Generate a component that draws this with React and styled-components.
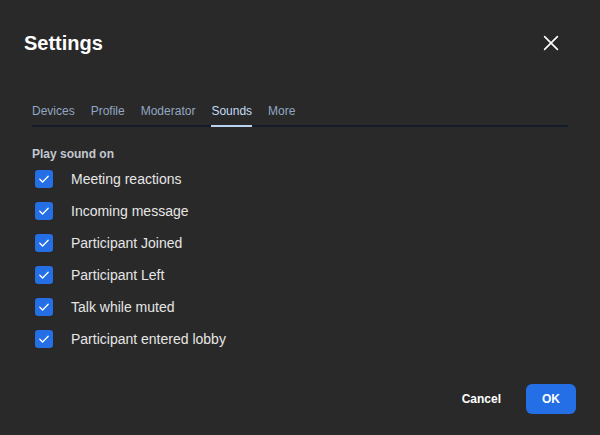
import React, { useState } from "react";
import styled, { createGlobalStyle } from "styled-components";

const GlobalStyle = createGlobalStyle`
  html, body {
    margin: 0;
    padding: 0;
    background: #292929;
    font-family: "Liberation Sans", Arial, sans-serif;
  }
`;

const Dialog = styled.div`
  width: 600px;
  height: 435px;
  box-sizing: border-box;
  background: #292929;
  padding: 24px 24px 21px;
  display: flex;
  flex-direction: column;
`;

const Header = styled.div`
  height: 38px;
  display: flex;
  align-items: center;
  justify-content: space-between;
`;

const Title = styled.h1`
  margin: 0;
  font-size: 20px;
  font-weight: 700;
  line-height: 24px;
  color: #ffffff;
`;

const CloseButton = styled.button`
  width: 24px;
  height: 24px;
  padding: 0;
  margin-right: 13px;
  border: none;
  background: none;
  color: #ffffff;
  display: flex;
  align-items: center;
  justify-content: center;
  cursor: pointer;
`;

const Body = styled.div`
  padding: 0 8px;
  flex: 1;
`;

const TabList = styled.div`
  margin-top: 33px;
  display: flex;
  gap: 16px;
  border-bottom: 2px solid #141c2b;
`;

const Tab = styled.button`
  padding: 8px 0 6px;
  margin-bottom: -2px;
  border: none;
  border-bottom: 2px solid ${(p) => (p.$active ? "#b8d2f2" : "transparent")};
  background: none;
  font-family: inherit;
  font-size: 12px;
  line-height: 16px;
  color: ${(p) => (p.$active ? "#c5daf4" : "#93a6c2")};
  cursor: pointer;
`;

const SectionTitle = styled.div`
  margin-top: 19px;
  margin-bottom: 1px;
  font-size: 12px;
  font-weight: 700;
  line-height: 16px;
  color: #c3c8d0;
`;

const Row = styled.label`
  height: 32px;
  display: flex;
  align-items: center;
  gap: 18px;
  padding-left: 3px;
  cursor: pointer;
`;

const Box = styled.span`
  width: 18px;
  height: 18px;
  border-radius: 3px;
  background: ${(p) => (p.$checked ? "#246fe5" : "transparent")};
  border: ${(p) => (p.$checked ? "none" : "1px solid #858585")};
  box-sizing: border-box;
  display: flex;
  align-items: center;
  justify-content: center;
`;

const Label = styled.span`
  font-size: 14px;
  line-height: 18px;
  color: #e6e6e6;
  margin-top: -1px;
`;

const Footer = styled.div`
  display: flex;
  justify-content: flex-end;
  gap: 9px;
`;

const Button = styled.button`
  height: 30px;
  padding: 0 16px;
  border: none;
  border-radius: 6px;
  font-family: inherit;
  font-size: 12px;
  font-weight: 700;
  color: #ffffff;
  background: ${(p) => (p.$primary ? "#246fe5" : "transparent")};
  cursor: pointer;
`;

const tabs = ["Devices", "Profile", "Moderator", "Sounds", "More"];
const sounds = [
  "Meeting reactions",
  "Incoming message",
  "Participant Joined",
  "Participant Left",
  "Talk while muted",
  "Participant entered lobby",
];

const Check = () => (
  <svg width="12" height="12" viewBox="0 0 12 12" fill="none">
    <path d="M1.8 6.3 L4.6 9 L10.2 3.2" stroke="#ffffff" strokeWidth="1.3" strokeLinecap="round" strokeLinejoin="round" />
  </svg>
);

export default function App() {
  const [active, setActive] = useState("Sounds");
  const [checked, setChecked] = useState(sounds.map(() => true));

  return (
    <>
      <GlobalStyle />
      <Dialog>
        <Header>
          <Title>Settings</Title>
          <CloseButton aria-label="Close">
            <svg width="20" height="20" viewBox="0 0 20 20" fill="none">
              <path d="M3.6 3.6 L16.4 16.4 M16.4 3.6 L3.6 16.4" stroke="#ffffff" strokeWidth="1.6" strokeLinecap="round" />
            </svg>
          </CloseButton>
        </Header>
        <Body>
          <TabList>
            {tabs.map((t) => (
              <Tab key={t} $active={t === active} onClick={() => setActive(t)}>
                {t}
              </Tab>
            ))}
          </TabList>
          <SectionTitle>Play sound on</SectionTitle>
          {sounds.map((s, i) => (
            <Row
              key={s}
              onClick={() => setChecked((c) => c.map((v, j) => (j === i ? !v : v)))}
            >
              <Box $checked={checked[i]}>{checked[i] && <Check />}</Box>
              <Label>{s}</Label>
            </Row>
          ))}
        </Body>
        <Footer>
          <Button>Cancel</Button>
          <Button $primary>OK</Button>
        </Footer>
      </Dialog>
    </>
  );
}
